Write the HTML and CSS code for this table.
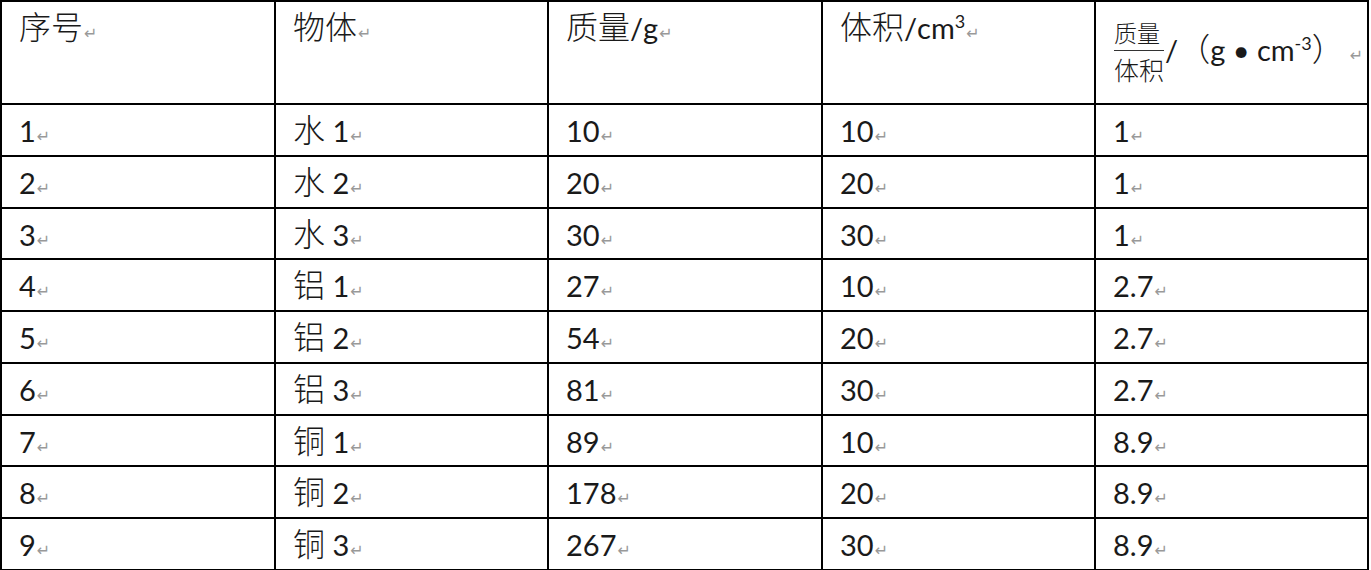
FILE: index.html
```html
<!DOCTYPE html>
<html lang="zh-CN">
<head>
<meta charset="utf-8">
<title>密度表</title>
<link rel="stylesheet" href="styles.css">
</head>
<body>
<div class="table">
  <div class="cell"><span class="zh">序号</span><span class="pm">↵</span></div>
  <div class="cell"><span class="zh">物体</span><span class="pm">↵</span></div>
  <div class="cell"><span class="zh">质量</span>/g<span class="pm">↵</span></div>
  <div class="cell"><span class="zh">体积</span>/cm<sup>3</sup><span class="pm">↵</span></div>
  <div class="cell head-frac"><span class="frac"><span class="num">质量</span><span class="den">体积</span></span>/<span class="zh">（</span>g • cm<sup>-3</sup><span class="zh">）</span><span class="pm pm-wide">↵</span></div>

  <div class="cell">1<span class="pm">↵</span></div>
  <div class="cell"><span class="zh">水</span> 1<span class="pm">↵</span></div>
  <div class="cell">10<span class="pm">↵</span></div>
  <div class="cell">10<span class="pm">↵</span></div>
  <div class="cell">1<span class="pm">↵</span></div>

  <div class="cell">2<span class="pm">↵</span></div>
  <div class="cell"><span class="zh">水</span> 2<span class="pm">↵</span></div>
  <div class="cell">20<span class="pm">↵</span></div>
  <div class="cell">20<span class="pm">↵</span></div>
  <div class="cell">1<span class="pm">↵</span></div>

  <div class="cell">3<span class="pm">↵</span></div>
  <div class="cell"><span class="zh">水</span> 3<span class="pm">↵</span></div>
  <div class="cell">30<span class="pm">↵</span></div>
  <div class="cell">30<span class="pm">↵</span></div>
  <div class="cell">1<span class="pm">↵</span></div>

  <div class="cell">4<span class="pm">↵</span></div>
  <div class="cell"><span class="zh">铝</span> 1<span class="pm">↵</span></div>
  <div class="cell">27<span class="pm">↵</span></div>
  <div class="cell">10<span class="pm">↵</span></div>
  <div class="cell">2.7<span class="pm">↵</span></div>

  <div class="cell">5<span class="pm">↵</span></div>
  <div class="cell"><span class="zh">铝</span> 2<span class="pm">↵</span></div>
  <div class="cell">54<span class="pm">↵</span></div>
  <div class="cell">20<span class="pm">↵</span></div>
  <div class="cell">2.7<span class="pm">↵</span></div>

  <div class="cell">6<span class="pm">↵</span></div>
  <div class="cell"><span class="zh">铝</span> 3<span class="pm">↵</span></div>
  <div class="cell">81<span class="pm">↵</span></div>
  <div class="cell">30<span class="pm">↵</span></div>
  <div class="cell">2.7<span class="pm">↵</span></div>

  <div class="cell">7<span class="pm">↵</span></div>
  <div class="cell"><span class="zh">铜</span> 1<span class="pm">↵</span></div>
  <div class="cell">89<span class="pm">↵</span></div>
  <div class="cell">10<span class="pm">↵</span></div>
  <div class="cell">8.9<span class="pm">↵</span></div>

  <div class="cell">8<span class="pm">↵</span></div>
  <div class="cell"><span class="zh">铜</span> 2<span class="pm">↵</span></div>
  <div class="cell">178<span class="pm">↵</span></div>
  <div class="cell">20<span class="pm">↵</span></div>
  <div class="cell">8.9<span class="pm">↵</span></div>

  <div class="cell">9<span class="pm">↵</span></div>
  <div class="cell"><span class="zh">铜</span> 3<span class="pm">↵</span></div>
  <div class="cell">267<span class="pm">↵</span></div>
  <div class="cell">30<span class="pm">↵</span></div>
  <div class="cell">8.9<span class="pm">↵</span></div>
</div>
</body>
</html>
```

FILE: styles.css
```css
html, body {
  margin: 0;
  padding: 0;
  background: #fff;
}

.table {
  display: grid;
  grid-template-columns: 274px 273px 274px 273px 273px;
  grid-template-rows: 103px repeat(9, 51.75px);
  width: max-content;
  border-left: 2px solid #000;
  border-top: 2px solid #000;
  font-family: "Lato", "Noto Sans CJK SC", sans-serif;
  font-size: 29px;
  line-height: 40px;
  color: #1a1a1a;
}

.cell {
  box-sizing: border-box;
  border-right: 2px solid #000;
  border-bottom: 2px solid #000;
  padding: 6px 0 0 17px;
  white-space: nowrap;
  overflow: hidden;
}

.zh {
  font-family: "Noto Sans CJK SC", sans-serif;
  font-size: 32px;
  font-weight: 300;
  line-height: 1;
}

sup {
  font-size: 18px;
  line-height: 0;
  vertical-align: 11px;
}

.pm {
  font-family: "DejaVu Sans", sans-serif;
  font-size: 16px;
  line-height: 0;
  color: #999;
  margin-left: 1px;
}

.pm-wide {
  margin-left: 6px;
}

.head-frac {
  padding-left: 18px;
}

.frac {
  display: inline-flex;
  flex-direction: column;
  font-family: "Noto Sans CJK SC", sans-serif;
  font-size: 23px;
  font-weight: 300;
  line-height: 28px;
  vertical-align: 19px;
  margin-top: 10px;
  margin-right: 1px;
}

.num {
  border-bottom: 1px solid #333;
  padding-bottom: 4px;
}

.den {
  font-size: 25px;
  line-height: 30px;
  padding-top: 3px;
}
```
